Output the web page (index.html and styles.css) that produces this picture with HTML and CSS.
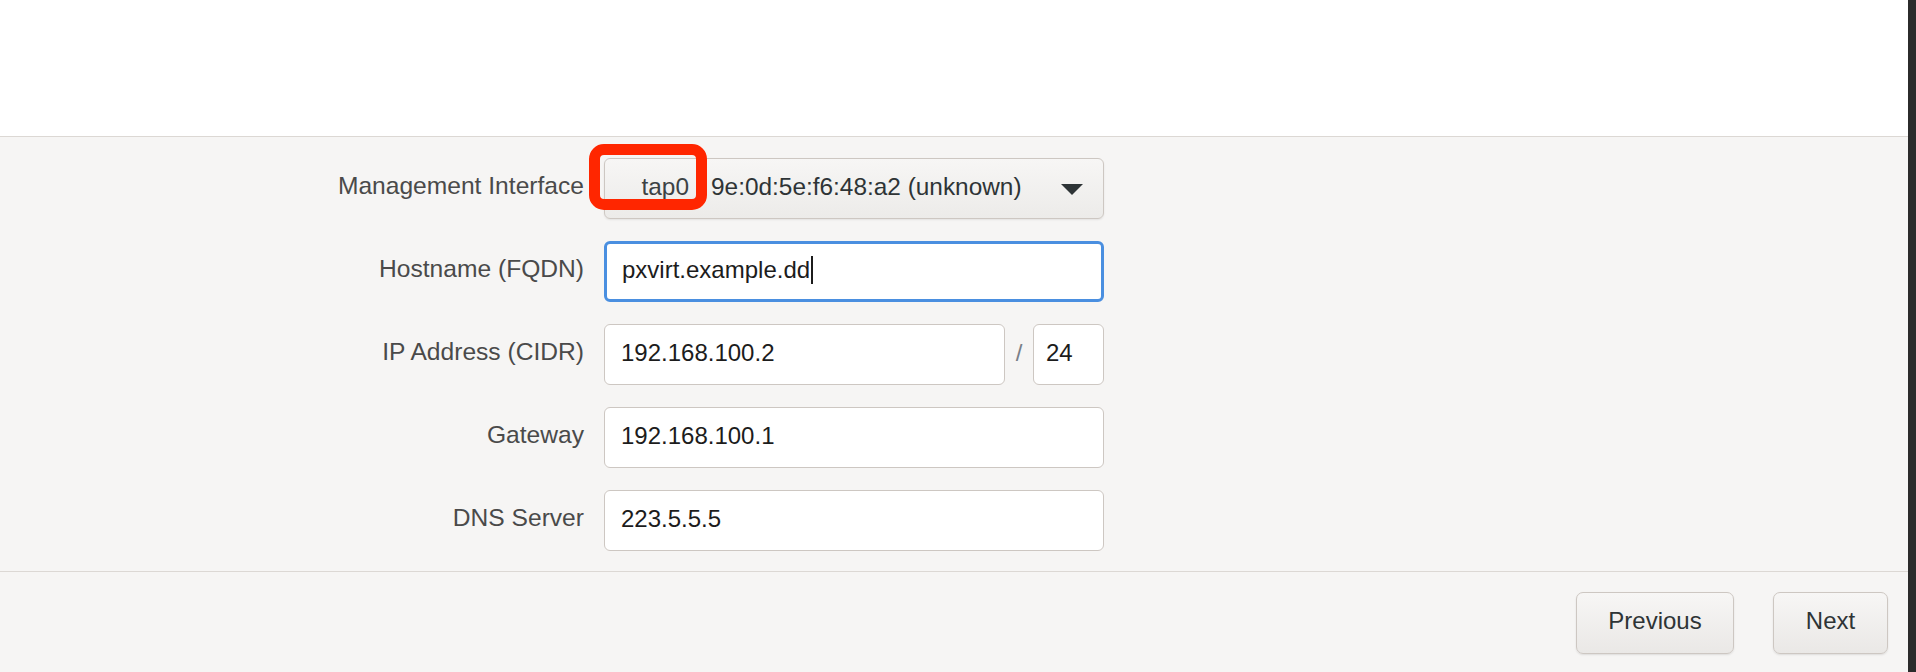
FILE: index.html
```html
<!DOCTYPE html>
<html lang="en">
<head>
    <meta charset="UTF-8">
    <meta name="viewport" content="width=device-width, initial-scale=1.0">
    <title>Network Configuration</title>
    <link rel="stylesheet" href="styles.css">
</head>
<body>

    <div class="window">
        <div class="page">
            <div class="banner"></div>

            <div class="form">
                <label class="label">Management Interface</label>
                <div class="select">
                    <span class="iface">tap0</span>
                    <span class="mac">9e:0d:5e:f6:48:a2 (unknown)</span>
                    <span class="arrow"></span>
                    <div class="highlight"></div>
                </div>

                <label class="label" for="hostname">Hostname (FQDN)</label>
                <div class="entry-wrap">
                    <input class="entry focused" id="hostname" type="text" value="pxvirt.example.dd">
                    <span class="caret"></span>
                </div>

                <label class="label" for="ip">IP Address (CIDR)</label>
                <div class="cidr">
                    <input class="entry" id="ip" type="text" value="192.168.100.2">
                    <span class="slash">/</span>
                    <input class="entry prefix" id="mask" type="text" value="24">
                </div>

                <label class="label" for="gateway">Gateway</label>
                <input class="entry" id="gateway" type="text" value="192.168.100.1">

                <label class="label" for="dns">DNS Server</label>
                <input class="entry" id="dns" type="text" value="223.5.5.5">
            </div>

            <div class="footer">
                <button class="btn prev">Previous</button>
                <button class="btn next">Next</button>
            </div>
        </div>
        <div class="edge"></div>
    </div>

</body>
</html>
```

FILE: styles.css
```css
html, body {
    margin: 0;
    padding: 0;
    height: 672px;
    overflow: hidden;
}
body {
    font-family: "Liberation Sans", Arial, sans-serif;
    font-size: 24px;
    color: #2e3436;
    background: #f6f5f4;
}
.window {
    display: flex;
    height: 672px;
}
.page {
    flex: 1;
    display: flex;
    flex-direction: column;
    background: #f6f5f4;
}
.edge {
    width: 8px;
    background: #2b2b2b;
}
.banner {
    height: 136px;
    background: #ffffff;
    border-bottom: 1px solid #dcd8d4;
}
.form {
    display: grid;
    grid-template-columns: 584px 500px;
    grid-auto-rows: 61px;
    column-gap: 20px;
    row-gap: 22px;
    padding: 21px 0 20px 0;
    border-bottom: 1px solid #dcd8d4;
}
.label {
    display: flex;
    align-items: center;
    justify-content: flex-end;
    padding-bottom: 5px;
    font-size: 24.6px;
    color: #4a4a4a;
}
.select {
    position: relative;
    display: flex;
    align-items: center;
    box-sizing: border-box;
    padding-bottom: 4px;
    border: 1px solid #cdc7c2;
    border-radius: 6px;
    background: linear-gradient(#f7f6f5, #ecebe9);
    box-shadow: 0 1px 2px rgba(0, 0, 0, 0.08);
    font-size: 24.4px;
}
.iface {
    width: 84px;
    text-align: right;
    color: #3c4244;
}
.mac {
    margin-left: 22px;
    flex: 1;
}
.arrow {
    width: 0;
    height: 0;
    border-left: 11px solid transparent;
    border-right: 11px solid transparent;
    border-top: 11px solid #2e3436;
    margin-right: 20px;
    margin-top: 6px;
}
.highlight {
    position: absolute;
    left: -16px;
    top: -15px;
    width: 118px;
    height: 66px;
    box-sizing: border-box;
    border: 11px solid #ff2600;
    border-radius: 15px;
}
.entry {
    box-sizing: border-box;
    width: 100%;
    height: 61px;
    margin: 0;
    padding: 0 0 4px 16px;
    border: 1px solid #cdc7c2;
    border-radius: 6px;
    background: #ffffff;
    font-family: "Liberation Sans", Arial, sans-serif;
    font-size: 24px;
    color: #1c1c1c;
    outline: none;
}
.entry.focused {
    border: 3px solid #4a8fe0;
    padding-left: 15px;
}
.entry-wrap {
    position: relative;
}
.caret {
    position: absolute;
    left: 207px;
    top: 15px;
    width: 2px;
    height: 28px;
    background: #1c1c1c;
}
.cidr {
    display: flex;
    align-items: center;
}
.cidr .entry {
    flex: 1;
}
.slash {
    width: 28px;
    padding-bottom: 4px;
    text-align: center;
    color: #7a7f88;
}
.cidr .entry.prefix {
    flex: none;
    width: 71px;
    padding-left: 12px;
}
.footer {
    display: flex;
    justify-content: flex-end;
    gap: 39px;
    padding: 20px 20px 0 0;
}
.btn {
    height: 62px;
    border: 1px solid #cdc7c2;
    border-radius: 7px;
    background: linear-gradient(#f7f6f5, #eae8e6);
    box-shadow: 0 1px 2px rgba(0, 0, 0, 0.1);
    font-family: "Liberation Sans", Arial, sans-serif;
    font-size: 24px;
    color: #2e3436;
    padding: 0 0 5px 0;
}
.prev {
    width: 158px;
}
.next {
    width: 115px;
}
```
